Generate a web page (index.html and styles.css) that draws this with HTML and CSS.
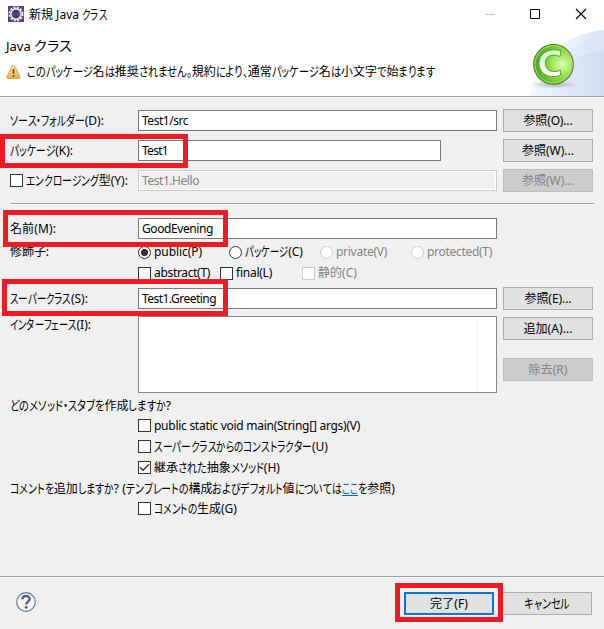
FILE: index.html
```html
<!DOCTYPE html>
<html lang="ja">
<head>
<meta charset="utf-8">
<title>新規 Java クラス</title>
<link rel="stylesheet" href="styles.css">
</head>
<body>
<div class="dialog">
  <header class="header">
    <div class="titlebar">
      <svg class="app-icon" width="16" height="16" viewBox="0 0 16 16"><rect width="16" height="16" fill="#51437c"/><circle cx="8" cy="8" r="6.5" fill="none" stroke="#eeeaf0" stroke-width="2" stroke-dasharray="2.1 1.3"/><circle cx="8" cy="8" r="5.1" fill="#433468" stroke="#e2dfe8" stroke-width="1.6"/><path d="M4 7h8M4 9h8" stroke="#75698f" stroke-width=".7"/></svg>
      <span class="title" data-w="78">新規 Java クラス</span>
      <svg class="window-controls" width="102" height="12" viewBox="0 0 102 12" fill="none"><path d="M0 6.5h10" stroke="#c8c8c8"/><path d="M45.5 1.5h9v9h-9z" stroke="#000"/><path d="M91 1l10 10M101 1L91 11" stroke="#000" stroke-width="1.1"/></svg>
    </div>
    <div class="banner">
      <div class="banner-text">
        <h1 data-w="66">Java クラス</h1>
        <div class="message">
          <svg width="15" height="16" viewBox="0 0 15 16"><defs><linearGradient id="warn" x2="0" y2="1"><stop stop-color="#fff0b0"/><stop offset="1" stop-color="#f0ac3c"/></linearGradient></defs><path d="M6.3 2Q7.4.5 8.5 2L13.9 12.5Q14.4 14.4 12.7 14.5H2.1Q.5 14.4 1 12.5Z" fill="url(#warn)" stroke="#d9a14f"/><path d="M7.5 5v4.8M7.5 11.2v1.7" stroke="#69401b" stroke-width="1.7"/></svg>
          <span data-w="408">このパッケージ名は推奨されません。規約により、通常パッケージ名は小文字で始まります</span>
        </div>
      </div>
      <svg class="wizard-art" width="76" height="66" viewBox="0 0 76 66"><defs><linearGradient id="sweep"><stop stop-color="#f8faff"/><stop offset="1" stop-color="#dde6f7"/></linearGradient><linearGradient id="sweep2"><stop stop-color="#f0f4fc"/><stop offset="1" stop-color="#cbd8f1"/></linearGradient><linearGradient id="letter" x2="0" y2="1"><stop stop-color="#d2f3bb"/><stop offset="1" stop-color="#fff"/></linearGradient><radialGradient id="ball" cx=".72" cy=".5" r=".8"><stop stop-color="#e0fbb8"/><stop offset=".45" stop-color="#86dc3c"/><stop offset="1" stop-color="#2f9410"/></radialGradient><radialGradient id="shadow"><stop stop-color="#777" stop-opacity=".5"/><stop offset="1" stop-color="#777" stop-opacity="0"/></radialGradient></defs>
        <path d="M1 66C5 32 37 3 76 0V66Z" fill="url(#sweep)"/><path d="M24 66C28 34 45 11 76 1V66Z" fill="#d7e1f5" opacity=".35"/><path d="M1 66C15 42 42 25 76 21V66Z" fill="url(#sweep2)" opacity=".6"/>
        <ellipse cx="26" cy="54.5" rx="24" ry="4" fill="url(#shadow)"/><circle cx="25.5" cy="34.3" r="19.8" fill="url(#ball)" stroke="#5f7a30" stroke-width="1.2"/><circle cx="25.5" cy="34.3" r="18.5" fill="none" stroke="#a5e968" stroke-width="1"/>
        <path d="M32.6 20.6C20 17.5 11 23.5 11 33.2S20 49.5 32.6 45.3V40.3C24.5 43.5 17.4 40.5 17.4 33.2S24 23.5 31 26.2Q32.2 26.5 32.6 25.3Z" fill="url(#letter)" stroke="#4f9a2c" stroke-width=".9"/></svg>
    </div>
  </header>

  <main class="form">
    <div class="row"><label class="label"><span data-w="94">ソース・フォルダー(D):</span></label><div class="field"><span data-w="46">Test1/src</span></div><button class="button"><span data-w="49">参照(O)...</span></button></div>
    <div class="row"><label class="label"><span data-w="63">パッケージ(K):</span></label><div class="field short"><span data-w="26">Test1</span></div><button class="button"><span data-w="52">参照(W)...</span></button><i class="mark mark-package"></i></div>
    <div class="row"><label class="label"><i class="check"></i><span data-w="102">エンクロージング型(Y):</span></label><div class="field disabled"><span data-w="57">Test1.Hello</span></div><button class="button disabled"><span data-w="52">参照(W)...</span></button></div>
    <div class="rule"></div>
    <div class="row name"><label class="label"><span data-w="46">名前(M):</span></label><div class="field"><span data-w="71">GoodEvening</span></div><i class="mark mark-name"></i></div>
    <div class="row options"><span class="label"><span data-w="39">修飾子:</span></span>
      <label class="option public"><i class="radio selected"></i><span data-w="48">public(P)</span></label><label class="option package"><i class="radio"></i><span data-w="58">パッケージ(C)</span></label><label class="option private disabled"><i class="radio"></i><span data-w="51">private(V)</span></label><label class="option disabled"><i class="radio"></i><span data-w="65">protected(T)</span></label></div>
    <div class="row options"><span class="label"></span><label class="option abstract"><i class="check"></i><span data-w="56">abstract(T)</span></label><label class="option final"><i class="check"></i><span data-w="36">final(L)</span></label><label class="option disabled"><i class="check"></i><span data-w="39">静的(C)</span></label></div>
    <div class="row super"><label class="label"><span data-w="78">スーパークラス(S):</span></label><div class="field"><span data-w="74">Test1.Greeting</span></div><button class="button"><span data-w="47">参照(E)...</span></button><i class="mark mark-super"></i></div>
    <div class="row interfaces"><label class="label"><span data-w="81">インターフェース(I):</span></label><div class="list"></div><div class="actions"><button class="button"><span data-w="49">追加(A)...</span></button><button class="button disabled"><span data-w="39">除去(R)</span></button></div></div>
    <div class="question"><span data-w="161">どのメソッド・スタブを作成しますか?</span></div>
    <div class="choices">
      <label class="option"><i class="check"></i><span data-w="206">public static void main(String[] args)(V)</span></label>
      <label class="option"><i class="check"></i><span data-w="174">スーパークラスからのコンストラクター(U)</span></label>
      <label class="option"><i class="check"><svg width="11" height="11" viewBox="0 0 11 11"><path d="M1 5.3L4 8.3L10 2.2" fill="none" stroke="#333" stroke-width="1.3"/></svg></i><span data-w="126">継承された抽象メソッド(H)</span></label>
    </div>
    <div class="question comments"><span data-w="332">コメントを追加しますか? (テンプレートの構成およびデフォルト値については</span><a data-w="16">ここ</a><span data-w="37">を参照)</span></div>
    <div class="choices comment-choice"><label class="option"><i class="check"></i><span data-w="83">コメントの生成(G)</span></label></div>
  </main>

  <footer class="footer">
    <svg width="20" height="20" viewBox="0 0 20 20"><circle cx="10" cy="10" r="9.3" fill="#f5f6f8" stroke="#65789b" stroke-width="1.2"/><path d="M6.4 7.3C6.4 3 13.6 2.9 13.6 7C13.6 9.6 10.3 9.5 10.3 12.5" fill="none" stroke="#4c6088" stroke-width="2.3"/><circle cx="10.2" cy="15.4" r="1.45" fill="#4c6088"/></svg>
    <button class="button primary"><span data-w="38">完了(F)</span></button>
    <button class="button"><span data-w="46">キャンセル</span></button>
    <i class="mark mark-finish"></i>
  </footer>
</div>
<script src="script.js"></script>
</body>
</html>
```
FILE: styles.css
```css
* { box-sizing: border-box; }
body {
  margin: 0;
  font: 12px/18px "Noto Sans", "Noto Sans CJK JP", sans-serif;
  color: #000;
}
.dialog {
  width: 604px;
  height: 629px;
  display: flex;
  flex-direction: column;
  background: #f0f0f0;
  overflow: hidden;
}
[data-w] { white-space: nowrap; flex: none; }
.kana { display: inline-block; white-space: nowrap; vertical-align: baseline; line-height: 16px; }
.kana-glyphs { display: inline-block; transform-origin: left; font-size: 13px; font-feature-settings: "palt"; }

.header { height: 98px; background: #fff; border-bottom: 1px solid #fff; box-shadow: inset 0 -1px #a0a0a0; flex: none; }
.titlebar { height: 30px; display: flex; align-items: center; padding: 0 17px 2px 8px; }
.title { margin-left: 5px; padding-top: 1px; }
.window-controls { margin-left: auto; }
.banner { display: flex; justify-content: space-between; height: 66px; }
.banner-text { padding: 6px 0 0 6px; }
h1 { margin: 0; font-size: 13px; line-height: 20px; font-weight: 400; }
h1 .kana-glyphs { font-size: 14px; }
.message { display: flex; align-items: center; margin-top: 7px; }
.message svg { margin-right: 6px; }

.form { padding: 11px 11px 0 10px; flex: 1; }
.row { position: relative; height: 23px; display: flex; align-items: center; margin-bottom: 7px; }
.label { width: 128px; flex: none; display: flex; align-items: center; }
.label .check { margin-right: 3px; }
.field {
  width: 359px;
  height: 21px;
  flex: none;
  display: flex;
  align-items: center;
  padding-left: 3px;
  border: 1px solid #7a7a7a;
  background: #fff;
}
.field.short { width: 303px; }
.field.disabled { background: #f0f0f0; border-color: #ccc; box-shadow: inset 0 0 0 1px #fff; color: #838383; }
.button {
  width: 90px;
  height: 23px;
  flex: none;
  display: flex;
  align-items: center;
  justify-content: center;
  padding: 0;
  font: inherit;
  color: #000;
  background: #e1e1e1;
  border: 1px solid #adadad;
}
.row > .button { margin-left: auto; }
.button.disabled { color: #838383; background: #ccc; border-color: #bfbfbf; }
.rule { height: 2px; margin: 11px -1px 12px 0; border-top: 1px solid #a0a0a0; border-bottom: 1px solid #fff; }
.row:has(+ .rule) { margin-bottom: 0; }
.name { margin-bottom: 3px; }
.options { height: 18px; margin-bottom: 3px; }
.option { display: flex; align-items: center; gap: 3px; }
.option.disabled { color: #838383; }
.public { width: 91px; }
.package { width: 91px; }
.private { width: 91px; }
.abstract { width: 82px; }
.final { width: 82px; }
.check, .radio { width: 13px; height: 13px; flex: none; display: block; background: #fff; border: 1px solid #333; }
.check svg { display: block; }
.radio { border-radius: 50%; }
.selected { background: radial-gradient(circle, #333 0 3.3px, #fff 3.9px); }
.option.disabled i { border-color: #ccc; }
.super { margin: 5px 0 6px; }
.interfaces { height: 77px; align-items: flex-start; margin-bottom: 4px; }
.list { width: 359px; height: 77px; border: 1px solid #828790; background: linear-gradient(90deg, #fff 338px, #e8f0fb 338px 339px, #fff 339px); }
.actions { display: flex; flex-direction: column; gap: 18px; margin: 1px 0 0 auto; }
.question { display: flex; height: 18px; }
.choices { padding-left: 128px; }
.choices .option { height: 21px; }
.comments { margin: 2px 0 0; }
a { color: #0066cc; text-decoration: none; border-bottom: 1px solid #0066cc; height: 16px; }

.footer {
  position: relative;
  height: 53px;
  flex: none;
  display: flex;
  align-items: flex-start;
  padding: 15px 12px 0 16px;
  border-top: 1px solid #a0a0a0;
  box-shadow: inset 0 1px #fff;
}
.footer .button { margin-left: 8px; }
.footer .primary { margin-left: auto; border: 2px solid #0078d7; }
.mark { position: absolute; border: 5px solid #ed1c24; pointer-events: none; }
.mark-package { left: -10px; top: -5px; width: 188px; height: 34px; }
.mark-name { left: -7px; top: -7px; width: 225px; height: 37px; z-index: 1; }
.mark-super { left: -8px; top: -8px; width: 226px; height: 37px; z-index: 1; }
.mark-finish { left: 395px; top: 6px; width: 108px; height: 39px; }
```
FILE: script.js
```js
document.querySelectorAll('[data-w]').forEach(function (el) {
  var target = Number(el.dataset.w);
  var parts = el.textContent.split(/([\u3001-\u30ff]+)/);
  el.textContent = '';
  var runs = [];
  parts.forEach(function (part, i) {
    if (!part) return;
    if (i % 2 === 0) { el.append(part); return; }
    Array.from(part).forEach(function (ch) {
      var box = document.createElement('span');
      var glyphs = document.createElement('span');
      box.className = 'kana';
      glyphs.className = 'kana-glyphs';
      glyphs.textContent = ch;
      box.append(glyphs);
      el.append(box);
      runs.push({ box: box, glyphs: glyphs });
    });
  });
  var range = document.createRange();
  range.selectNodeContents(el);
  var total = range.getBoundingClientRect().width;
  if (!runs.length) {
    el.style.letterSpacing = (target - total) / el.textContent.length + 'px';
    return;
  }
  var sizes = runs.map(function (r) { return r.glyphs.getBoundingClientRect().width; });
  var kanaWidth = sizes.reduce(function (a, b) { return a + b; }, 0);
  // Block-level text reports the full line, so non-kana width is measured per text node.
  var otherWidth = 0;
  el.childNodes.forEach(function (node) {
    if (node.nodeType !== Node.TEXT_NODE) return;
    range.selectNodeContents(node);
    otherWidth += range.getBoundingClientRect().width;
  });
  var scale = (target - otherWidth) / kanaWidth;
  runs.forEach(function (r, i) {
    r.box.style.width = sizes[i] * scale + 'px';
    r.glyphs.style.transform = 'scaleX(' + scale + ')';
  });
});
```
